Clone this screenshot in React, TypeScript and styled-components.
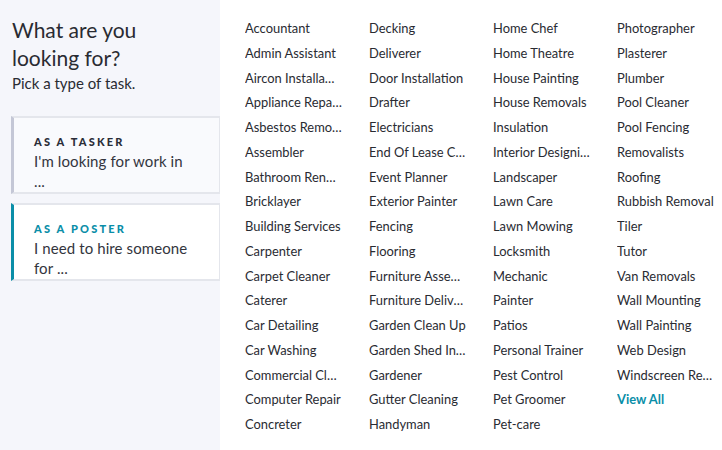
import React from 'react';
import styled, { createGlobalStyle } from 'styled-components';

const GlobalStyle = createGlobalStyle`
  html, body {
    margin: 0;
    padding: 0;
    background: #ffffff;
  }
  body {
    font-family: Lato, "Noto Sans", "Liberation Sans", sans-serif;
    color: #292b32;
  }
  * {
    box-sizing: border-box;
  }
`;

const Page = styled.div`
  display: flex;
  width: 722px;
  height: 450px;
  overflow: hidden;
`;

const Sidebar = styled.aside`
  width: 220px;
  flex-shrink: 0;
  background: #f5f6fb;
  padding: 16px 0 0 11px;
  display: flex;
  flex-direction: column;
`;

const Title = styled.h2`
  margin: 0 0 0 1px;
  font-size: 21px;
  font-weight: 400;
  line-height: 28px;
  color: #292b32;
`;

const Subtitle = styled.p`
  margin: 1px 0 0 1px;
  font-size: 15px;
  line-height: 20px;
  color: #292b32;
`;

const RoleList = styled.div`
  margin-top: 23px;
  display: flex;
  flex-direction: column;
  gap: 9px;
`;

const RoleCard = styled.div<{ $active?: boolean }>`
  padding: 15px 27px 1px 20px;
  background: ${p => (p.$active ? '#ffffff' : '#f9fafd')};
  border: 2px solid #e4e6ec;
  border-right-width: 1px;
  border-left: 3px solid ${p => (p.$active ? '#0a8ea8' : '#c4c7d6')};
`;

const RoleLabel = styled.div<{ $active?: boolean }>`
  font-size: 11px;
  font-weight: 900;
  letter-spacing: 2.2px;
  line-height: 18px;
  color: ${p => (p.$active ? '#0a8ea8' : '#2a2d38')};
`;

const RoleText = styled.div`
  font-size: 15px;
  line-height: 20px;
  letter-spacing: 0.1px;
  color: #33353d;
`;

const Main = styled.main`
  flex: 1;
  padding: 16px 0 0 25px;
  display: flex;
`;

const Column = styled.ul`
  list-style: none;
  margin: 0;
  padding: 0;
  width: 124px;
  flex-shrink: 0;
`;

const Item = styled.li<{ $link?: boolean }>`
  height: 24.75px;
  line-height: 24.75px;
  max-width: 97px;
  font-size: 12.9px;
  white-space: nowrap;
  overflow: hidden;
  text-overflow: ellipsis;
  color: ${p => (p.$link ? '#0a8ea8' : '#292b32')};
  font-weight: ${p => (p.$link ? 700 : 400)};
`;

const columns: string[][] = [
  [
    'Accountant', 'Admin Assistant', 'Aircon Installation', 'Appliance Repairs',
    'Asbestos Removal', 'Assembler', 'Bathroom Renovations', 'Bricklayer',
    'Building Services', 'Carpenter', 'Carpet Cleaner', 'Caterer', 'Car Detailing',
    'Car Washing', 'Commercial Cleaning', 'Computer Repair', 'Concreter',
  ],
  [
    'Decking', 'Deliverer', 'Door Installation', 'Drafter', 'Electricians',
    'End Of Lease Cleaning', 'Event Planner', 'Exterior Painter', 'Fencing',
    'Flooring', 'Furniture Assembly', 'Furniture Delivery', 'Garden Clean Up',
    'Garden Shed Installation', 'Gardener', 'Gutter Cleaning', 'Handyman',
  ],
  [
    'Home Chef', 'Home Theatre', 'House Painting', 'House Removals', 'Insulation',
    'Interior Designing', 'Landscaper', 'Lawn Care', 'Lawn Mowing', 'Locksmith',
    'Mechanic', 'Painter', 'Patios', 'Personal Trainer', 'Pest Control',
    'Pet Groomer', 'Pet-care',
  ],
  [
    'Photographer', 'Plasterer', 'Plumber', 'Pool Cleaner', 'Pool Fencing',
    'Removalists', 'Roofing', 'Rubbish Removal', 'Tiler', 'Tutor', 'Van Removals',
    'Wall Mounting', 'Wall Painting', 'Web Design', 'Windscreen Repair',
  ],
];

const App: React.FC = () => {
  return (
    <>
      <GlobalStyle />
      <Page>
        <Sidebar>
          <Title>
            What are you
            <br />
            looking for?
          </Title>
          <Subtitle>Pick a type of task.</Subtitle>
          <RoleList>
            <RoleCard>
              <RoleLabel>AS A TASKER</RoleLabel>
              <RoleText>I'm looking for work in ...</RoleText>
            </RoleCard>
            <RoleCard $active>
              <RoleLabel $active>AS A POSTER</RoleLabel>
              <RoleText>I need to hire someone for ...</RoleText>
            </RoleCard>
          </RoleList>
        </Sidebar>
        <Main>
          {columns.map((col, i) => (
            <Column key={i}>
              {col.map(name => (
                <Item key={name}>{name}</Item>
              ))}
              {i === columns.length - 1 && <Item $link>View All</Item>}
            </Column>
          ))}
        </Main>
      </Page>
    </>
  );
};

export default App;
